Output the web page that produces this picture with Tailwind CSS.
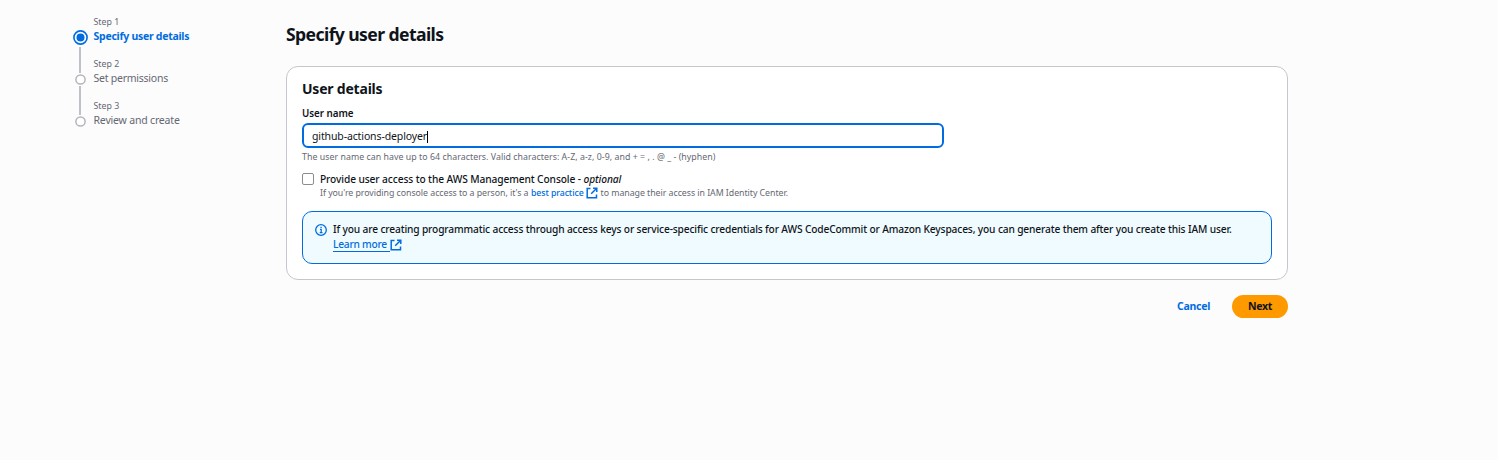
<!DOCTYPE html>
<html lang="en">
<head>
<meta charset="utf-8">
<title>Specify user details</title>
<script src="https://cdn.jsdelivr.net/npm/@tailwindcss/browser@4"></script>
</head>
<body class="h-[460px] overflow-hidden bg-[#fcfcfd] font-['Noto_Sans',sans-serif] text-[#0f141a]">
<div class="flex">
  <nav class="w-[286px] shrink-0 pl-[73px] pt-[15px]">
    <ol class="whitespace-nowrap text-[#656871]">
      <li class="flex h-[42px] gap-[5.5px]">
        <div class="flex w-[15px] flex-col items-center pt-[15px]">
          <svg class="size-[15px] shrink-0" viewBox="0 0 15 15"><circle cx="7.5" cy="7.5" r="6.6" fill="#fff" stroke="#006ce0" stroke-width="1.6"/><circle cx="7.5" cy="7.5" r="4" fill="#006ce0"/></svg>
          <span class="mr-[1px] mt-[2px] h-[26px] w-[2px] shrink-0 bg-[#c0c0c7]"></span>
        </div>
        <div><div class="h-[14px] text-[8.8px] leading-[14px]">Step 1</div><div class="text-[10.5px] font-bold leading-[15px] tracking-[-0.27px] text-[#006ce0]">Specify user details</div></div>
      </li>
      <li class="flex h-[42px] gap-[5.5px]">
        <div class="flex w-[15px] flex-col items-center pt-[17px]">
          <svg class="mr-[1px] size-[11px] shrink-0" viewBox="0 0 11 11"><circle cx="5.5" cy="5.5" r="4.6" fill="#fff" stroke="#b4b4bb" stroke-width="1.5"/></svg>
          <span class="mr-[1px] mt-[1px] h-[29px] w-[2px] shrink-0 bg-[#c0c0c7]"></span>
        </div>
        <div><div class="h-[14px] text-[8.8px] leading-[14px]">Step 2</div><div class="text-[10.5px] leading-[15px] tracking-[-0.24px]">Set permissions</div></div>
      </li>
      <li class="flex h-[42px] gap-[5.5px]">
        <div class="flex w-[15px] flex-col items-center pt-[17px]">
          <svg class="mr-[1px] size-[11px] shrink-0" viewBox="0 0 11 11"><circle cx="5.5" cy="5.5" r="4.6" fill="#fff" stroke="#b4b4bb" stroke-width="1.5"/></svg>
        </div>
        <div><div class="h-[14px] text-[8.8px] leading-[14px]">Step 3</div><div class="text-[10.5px] leading-[15px] tracking-[-0.18px]">Review and create</div></div>
      </li>
    </ol>
  </nav>
  <main class="w-[1002px] whitespace-nowrap pt-[22px]">
    <h1 class="h-[44px] text-[17.6px] font-bold leading-[25px] tracking-[-0.6px]">Specify user details</h1>
    <section class="h-[214px] rounded-[12px] border border-[#c6c6cd] bg-white px-[15px] pt-[12px]">
      <h2 class="text-[14px] font-bold leading-[20px] tracking-[-0.21px]">User details</h2>
      <div class="mt-[8px] text-[9.8px] font-semibold leading-[14px] tracking-[-0.03px]">User name</div>
      <div class="mt-[2px] flex h-[25px] w-[642px] items-center rounded-[6px] border-2 border-[#006ce0] px-[8px] pt-[2px] text-[10.5px]"><span class="tracking-[-0.12px]">github-actions-deployer</span><span class="h-[12px] w-[1px] bg-black"></span></div>
      <div class="mt-[2px] text-[8.8px] leading-[14px] tracking-[0.04px] text-[#656871]">The user name can have up to 64 characters. Valid characters: A-Z, a-z, 0-9, and + = , . @ _ - (hyphen)</div>
      <div class="mt-[8px] flex gap-[6px]">
        <span class="mt-[1px] size-[12px] rounded-[2px] border border-[#8c8c94] bg-white"></span>
        <div>
          <div class="text-[10.2px] font-medium leading-[15px] tracking-[-0.1px]">Provide user access to the AWS Management Console - <i>optional</i></div>
          <div class="flex h-[12px] items-center text-[8.8px] leading-[12px] tracking-[-0.047px] text-[#656871]"><span>If you're providing console access to a person, it's a</span><span class="ml-[2.5px] font-medium tracking-[-0.1px] text-[#006ce0]">best practice</span>
            <svg class="ml-[2px] mr-[3px] size-[12px] shrink-0" viewBox="0 0 12 12" fill="none" stroke="#006ce0" stroke-width="1.5"><path d="M4.5 1.5H1.2v9.3h9.3V7.5M7 1.2h3.8V5M10.5 1.5 5.2 6.8"/></svg>
            <span>to manage their access in IAM Identity Center.</span></div>
        </div>
      </div>
      <div class="mt-[12px] flex h-[53px] w-[970px] gap-[6px] rounded-[10px] border border-[#006ce0] bg-[#f0fbff] pl-[12px] pt-[10px] text-[10.2px] leading-[15px]">
        <svg class="mt-[2px] size-[12px] shrink-0" viewBox="0 0 12 12"><circle cx="6" cy="6" r="5.3" fill="none" stroke="#006ce0" stroke-width="1.3"/><path d="M5 5.4h1.2v3.3M4.7 8.7h2.8M5.4 3.4h1.3" fill="none" stroke="#006ce0" stroke-width="1.2"/></svg>
        <div>
          <div class="font-medium tracking-[-0.14px]">If you are creating programmatic access through access keys or service-specific credentials for AWS CodeCommit or Amazon Keyspaces, you can generate them after you create this IAM user.</div>
          <div class="flex text-[#006ce0]"><div class="h-[15px] w-[57px] border-b border-[#006ce0] font-medium tracking-[-0.23px]">Learn more</div>
            <svg class="mt-[2px] size-[12px]" viewBox="0 0 12 12" fill="none" stroke="#006ce0" stroke-width="1.5"><path d="M4.5 1.5H1.2v9.3h9.3V7.5M7 1.2h3.8V5M10.5 1.5 5.2 6.8"/></svg></div>
        </div>
      </div>
    </section>
    <div class="mt-[15px] flex h-[23px] items-center justify-end gap-[22px] text-[10.5px] font-bold tracking-[-0.27px]">
      <span class="text-[#006ce0]">Cancel</span>
      <button class="h-[23px] w-[56px] rounded-full bg-[#ff9900]">Next</button>
    </div>
  </main>
</div>
</body>
</html>
